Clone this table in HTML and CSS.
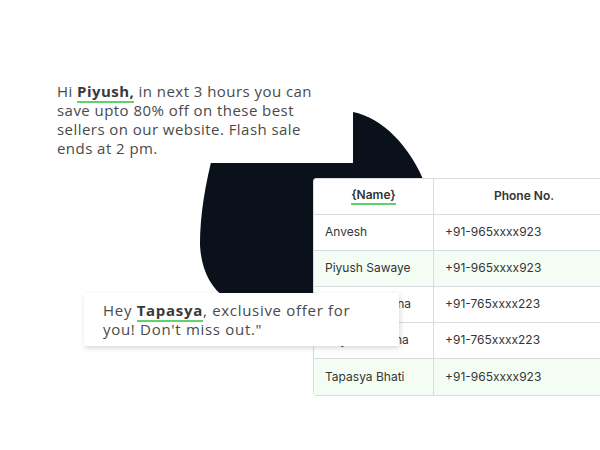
FILE: index.html
```html
<!DOCTYPE html>
<html>
<head>
<meta charset="utf-8">
<link rel="stylesheet" href="styles.css">
</head>
<body>
<div class="stage">
  <svg class="blob" width="600" height="450" viewBox="0 0 600 450">
    <path d="M215,140 L353,112 C382,118 410,145 426,186 L440,300 L226,298 C210,288 201,268 200,245 C200,215 205,185 214,150 Z" fill="#0a111b"/>
  </svg>

  <div class="table">
    <div class="cell head"><span class="mark">{Name}</span></div>
    <div class="cell head">Phone No.</div>
    <div class="cell">Anvesh</div>
    <div class="cell">+91-965xxxx923</div>
    <div class="cell alt">Piyush Sawaye</div>
    <div class="cell alt">+91-965xxxx923</div>
    <div class="cell">Shivani Saxena</div>
    <div class="cell">+91-765xxxx223</div>
    <div class="cell">Priyanshi Rana</div>
    <div class="cell">+91-765xxxx223</div>
    <div class="cell alt">Tapasya Bhati</div>
    <div class="cell alt">+91-965xxxx923</div>
  </div>

  <div class="card card-one">
    <p class="msg">Hi <b class="name">Piyush,</b> in next 3 hours you can<br>save upto 80% off on these best<br>sellers on our website. Flash sale<br>ends at 2 pm.</p>
  </div>

  <div class="card card-two">
    <p class="msg msg-wide">Hey <b class="name">Tapasya</b>, exclusive offer for<br>you! Don't miss out."</p>
  </div>
</div>
</body>
</html>
```

FILE: styles.css
```css
html, body {
  margin: 0;
  padding: 0;
  background: #ffffff;
}

.stage {
  position: relative;
  width: 600px;
  height: 450px;
  overflow: hidden;
}

.blob {
  position: absolute;
  left: 0;
  top: 0;
}

.card {
  position: absolute;
  background: #ffffff;
  box-sizing: border-box;
}

.card-one {
  left: 38px;
  top: 62px;
  width: 315px;
  height: 101px;
  padding: 20px 0 0 19px;
}

.card-two {
  left: 84px;
  top: 293px;
  width: 315px;
  height: 53px;
  padding: 8px 0 0 19px;
  box-shadow: 1px 2px 5px rgba(0, 0, 0, 0.16);
}

.msg {
  margin: 0;
  font-family: "Open Sans", sans-serif;
  font-size: 15px;
  line-height: 19px;
  color: #4a4a4a;
  letter-spacing: 0.45px;
}

.msg-wide {
  letter-spacing: 0.7px;
}

.name {
  font-weight: 700;
  color: #3a3a3a;
  border-bottom: 2px solid #5fd36b;
  padding-bottom: 0;
}

.table {
  position: absolute;
  left: 313px;
  top: 178px;
  width: 300px;
  display: grid;
  grid-template-columns: 120px 1fr;
  border: 1px solid #d8dcdf;
  border-radius: 3px;
  background: #ffffff;
  font-family: Inter, sans-serif;
  font-size: 12px;
  color: #353535;
}

.cell {
  height: 36px;
  box-sizing: border-box;
  display: flex;
  align-items: center;
  padding: 0 0 2px 11px;
  border-bottom: 1px solid #d8dcdf;
  white-space: nowrap;
}

.cell:nth-child(odd) {
  border-right: 1px solid #d8dcdf;
}

.cell:nth-last-child(-n+2) {
  border-bottom: none;
}

.head {
  justify-content: center;
  padding-left: 0;
  font-weight: 600;
  color: #333333;
}

.mark {
  border-bottom: 2px solid #5fd36b;
  padding-bottom: 1px;
}

.alt {
  background: #f3fdf4;
}
```
